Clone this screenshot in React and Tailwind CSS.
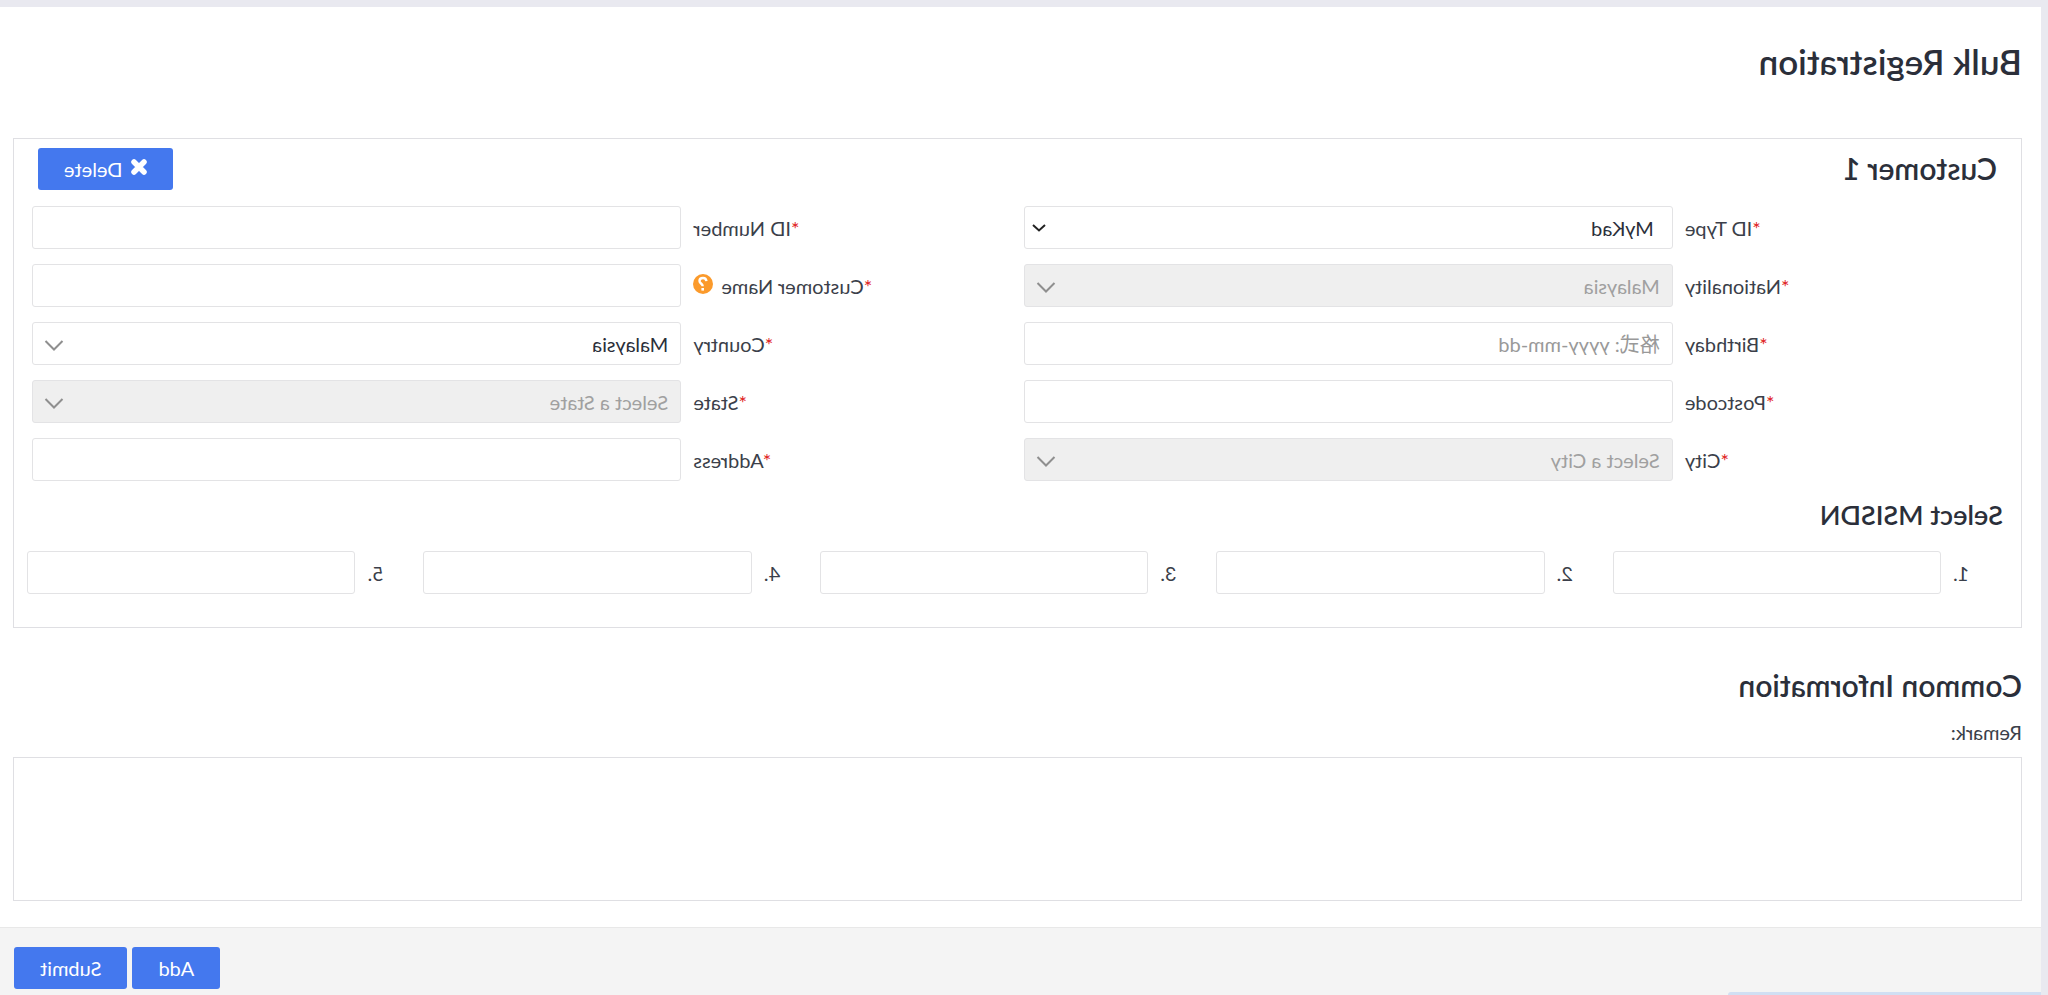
import { useState } from "react";

const fieldClass =
  "block h-[43px] w-full rounded-[3px] border border-[#e3e3e5] bg-white px-3 text-xl text-[#2b2f3a] outline-none placeholder:text-[#999999] disabled:bg-[#efefef] disabled:text-[#a0a0a0] disabled:opacity-100";

const buttonClass =
  "flex h-[42px] items-center justify-center rounded-[3px] bg-[#4478ee] px-[26px] text-xl text-white";

function HelpIcon() {
  return (
    <svg className="mb-1 size-5" viewBox="0 0 20 20" fill="none">
      <circle cx="10" cy="10" r="10" fill="#fb9a2b" />
      <path
        d="M6.600 7.200C6.800 5 8.200 4 10 4c2.200 0 3.500 1.300 3.500 3 0 2.400-3.200 2.600-3.200 5.300"
        stroke="white"
        strokeWidth="2.400"
      />
      <rect x="9" y="14" width="2.600" height="2.600" fill="white" />
    </svg>
  );
}

function CrossIcon() {
  return (
    <svg
      className="mb-1 size-4"
      viewBox="0 0 16 16"
      stroke="currentColor"
      strokeWidth="5.500"
      strokeLinecap="round"
    >
      <path d="M3 3l10 10M13 3L3 13" />
    </svg>
  );
}

// Label cell with the red required star
function Label({ htmlFor, children, help }) {
  return (
    <div className="flex items-center justify-end gap-2 pr-3 text-xl text-[#3b3f4a]">
      <label htmlFor={htmlFor}>
        <span className="text-[#e02020]">*</span>
        {children}
      </label>
      {help && <HelpIcon />}
    </div>
  );
}

function Select({ id, options, disabled, native }) {
  return (
    <div className="relative">
      <select
        id={id}
        disabled={disabled}
        className={`${fieldClass} appearance-none ${native ? "pl-[18px]" : ""}`}
      >
        {options.map((option) => (
          <option key={option}>{option}</option>
        ))}
      </select>
      {native ? (
        <svg
          className="pointer-events-none absolute top-[18px] right-[8px] h-2 w-3.5"
          viewBox="0 0 14 8"
          fill="none"
          stroke="#222222"
          strokeWidth="2"
        >
          <path d="M1 1l6 5.5L13 1" />
        </svg>
      ) : (
        <svg
          className="pointer-events-none absolute top-[18px] right-[12px] h-[11px] w-5"
          viewBox="0 0 20 11"
          fill="none"
          stroke="#8f8f8f"
          strokeWidth="2"
        >
          <path d="M1.500 1l8.500 8.500L18.500 1" />
        </svg>
      )}
    </div>
  );
}

export default function App() {
  const [remark, setRemark] = useState("");

  return (
    <div className="relative flex min-h-screen -scale-x-100 flex-col overflow-hidden border-t-[7px] border-l-[7px] border-[#e9e9f0] bg-white font-[Lato,'Noto_Sans_CJK_SC',sans-serif] text-[#2b2f3a] [font-variant-ligatures:none]">
      <main className="pr-[13px] pb-[26px] pl-[19px]">
        <h1 className="pt-[31px] text-[35px] leading-[46px] font-semibold">
          Bulk Registration
        </h1>

        <section className="mt-[54px] border border-[#dfdfe3] pb-[33px]">
          <div className="flex items-start justify-between pt-[9px] pr-6 pl-6">
            <h2 className="text-[30px] leading-10 font-semibold">
              Customer 1
            </h2>
            <button type="button" className={`${buttonClass} gap-2`}>
              <CrossIcon />
              Delete
            </button>
          </div>

          <div className="mt-4 mr-[18px] ml-1.5 grid grid-cols-[342fr_649fr_342fr_649fr] gap-y-[15px]">
            <Label htmlFor="idType">ID Type</Label>
            <Select id="idType" options={["MyKad"]} native />
            <Label htmlFor="idNumber">ID Number</Label>
            <input id="idNumber" type="text" className={fieldClass} />

            <Label htmlFor="nationality">Nationality</Label>
            <Select id="nationality" options={["Malaysia"]} disabled />
            <Label htmlFor="customerName" help>
              Customer Name
            </Label>
            <input id="customerName" type="text" className={fieldClass} />

            <Label htmlFor="birthday">Birthday</Label>
            <input
              id="birthday"
              type="text"
              placeholder="格式: yyyy-mm-dd"
              className={fieldClass}
            />
            <Label htmlFor="country">Country</Label>
            <Select id="country" options={["Malaysia"]} />

            <Label htmlFor="postcode">Postcode</Label>
            <input id="postcode" type="text" className={fieldClass} />
            <Label htmlFor="state">State</Label>
            <Select id="state" options={["Select a State"]} disabled />

            <Label htmlFor="city">City</Label>
            <Select id="city" options={["Select a City"]} disabled />
            <Label htmlFor="address">Address</Label>
            <input id="address" type="text" className={fieldClass} />
          </div>

          <h3 className="mt-4 pl-[18px] text-[27px] leading-9 font-semibold">
            Select MSISDN
          </h3>
          <div className="mt-[18px] mr-[13px] ml-3 grid grid-cols-5">
            {[1, 2, 3, 4, 5].map((n) => (
              <div key={n} className="flex items-center">
                <label
                  htmlFor={`msisdn${n}`}
                  className="w-[68px] shrink-0 pr-3 text-right text-xl text-[#3b3f4a]"
                >
                  {n}.
                </label>
                <input id={`msisdn${n}`} type="text" className={fieldClass} />
              </div>
            ))}
          </div>
        </section>

        <h2 className="mt-9 text-[30px] leading-[42px] font-semibold">
          Common Information
        </h2>
        <label
          htmlFor="remark"
          className="mt-3 block text-xl leading-7 text-[#3b3f4a]"
        >
          Remark:
        </label>
        <textarea
          id="remark"
          value={remark}
          onChange={(e) => setRemark(e.target.value)}
          className="mt-[11px] block h-36 w-full resize-none border border-[#dfdfe3] p-3 text-xl outline-none"
        />
      </main>

      <footer className="flex flex-1 items-start justify-end gap-[5px] border-t border-[#e8e8e8] bg-[#f4f4f4] pt-[19px] pr-3.5">
        <button type="button" className={buttonClass}>
          Add
        </button>
        <button type="submit" className={buttonClass}>
          Submit
        </button>
      </footer>

      <div className="absolute bottom-0 -left-[7px] h-[3px] w-80 rounded-tr bg-[#d1dff3]" />
    </div>
  );
}
